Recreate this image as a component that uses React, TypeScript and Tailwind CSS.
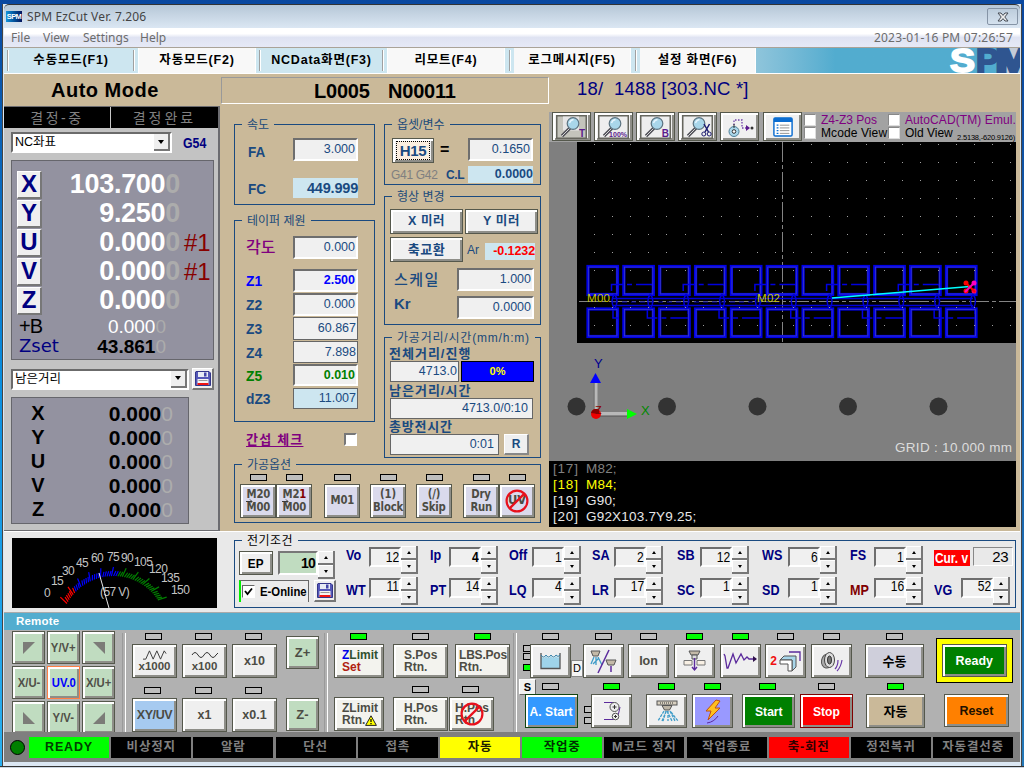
import React from "react";

type Kids = { children?: React.ReactNode; c?: string };

const bevel =
  "box-border flex shrink-0 items-center justify-center border border-[#55584c] shadow-[inset_2px_2px_0_#ffffff,inset_-2px_-2px_0_#8e8e88]";
const sunken =
  "box-border flex shrink-0 items-center justify-end border-2 border-t-[#6e6e6e] border-l-[#6e6e6e] border-r-white border-b-white bg-[#f0f0f0]";
const flat = "box-border flex shrink-0 items-center justify-end border border-[#666] bg-[#f0f0f0]";

function Group({ title, c = "", tc = "bg-[#cab999] text-[#1a4a7a]", children }: Kids & { title: string; tc?: string }) {
  return (
    <div className={`box-border flex shrink-0 flex-col border border-[#1a4a80] ${c}`}>
      <div className={`-mt-[9px] ml-[7px] flex h-[17px] shrink-0 items-center self-start px-[5px] text-[12px] whitespace-nowrap ${tc}`}>{title}</div>
      {children}
    </div>
  );
}

function Led({ on, c = "" }: { on?: boolean; c?: string }) {
  return <div className={`box-border h-[7px] w-[17px] shrink-0 border border-black ${on ? "bg-[#00ff00]" : "bg-[#bebebe]"} ${c}`} />;
}

function Key({ on, noLed, box, led = "", children, c = "" }: Kids & { on?: boolean; noLed?: boolean; box: string; led?: string }) {
  return (
    <div className={`flex shrink-0 flex-col items-center ${c}`}>
      <Led on={on} c={`${noLed ? "invisible" : ""} ${led}`} />
      <div className={`${bevel} mt-[4px] h-[34px] ${box}`}>{children}</div>
    </div>
  );
}

const tabs = [
  { t: "수동모드(F1)", c: "w-[135px] bg-[#cde6f0]", lined: true },
  { t: "자동모드(F2)", c: "w-[117px] bg-[#f8f8f8]", lined: false },
  { t: "NCData화면(F3)", c: "w-[132px] bg-[#cde6f0]", lined: true },
  { t: "리모트(F4)", c: "w-[117px] bg-[#f8f8f8]", lined: false },
  { t: "로그메시지(F5)", c: "w-[117px] bg-[#f8f8f8]", lined: false, gap: true },
  { t: "설정 화면(F6)", c: "w-[116px] bg-[#f8f8f8]", lined: false, gap: true },
];

function SpmLogo() {
  return (
    <svg width="71" height="25" viewBox="0 0 71 25">
      <path d="M50 0H71V25H50z" fill="#c4ccd8" />
      <g fontFamily="Liberation Sans" fontSize="33" fontWeight="bold">
        <text x="1" y="24" textLength="25" lengthAdjust="spacingAndGlyphs" fill="#fff" stroke="#fff" strokeWidth="1.800">S</text>
        <text x="27" y="24" textLength="23" lengthAdjust="spacingAndGlyphs" fill="#2f5590" stroke="#2f5590" strokeWidth="2">P</text>
        <text x="47" y="24" textLength="35" lengthAdjust="spacingAndGlyphs" fill="#2f5590" stroke="#2f5590" strokeWidth="3.500">M</text>
      </g>
    </svg>
  );
}

function TopBars() {
  return (
    <>
      <div className="flex h-[24px] shrink-0 items-center rounded-t-[5px] border-t border-[#333] bg-gradient-to-b from-[#b6c7d7] to-[#dbe7f3] pl-[2px]">
        <div className="flex h-[11px] w-[16px] items-center justify-center overflow-hidden bg-gradient-to-r from-[#1594dc] to-[#05145e] text-[7.500px] font-bold tracking-[-0.6px] text-white">SPM</div>
        <div className="ml-[5px] w-[400px] font-['Noto_Sans',sans-serif] text-[12px] tracking-[0.15px] text-[#444]">SPM EzCut Ver. 7.206</div>
        <div className="mr-[2px] ml-auto box-border flex h-[17px] w-[31px] items-center justify-center rounded-[2px] border border-[#8594a6]">
          <svg width="12" height="10" viewBox="0 0 12 10">
            <path d="M1 1h3l2 2.400L8 1h3L7.800 5 11 9H8L6 6.600 4 9H1l3.200-4z" fill="#eee" stroke="#444b55" />
          </svg>
        </div>
      </div>
      <div className="flex h-[19px] shrink-0 items-center bg-gradient-to-b from-white from-30% via-[#dfe3f2] via-50% to-[#e6e9f7] font-['Noto_Sans',sans-serif] text-[12px] text-[#6c6c6c]">
        <span className="ml-[7px] w-[32px]">File</span>
        <span className="w-[40px]">View</span>
        <span className="w-[57px]">Settings</span>
        <span>Help</span>
        <span className="mr-[7px] ml-auto text-[12px] tracking-[0.2px]">2023-01-16 PM 07:26:57</span>
      </div>
      <div className="flex h-[27px] shrink-0 border-t border-b border-t-[#aaa398] border-b-white bg-[#cde6f0]">
        {tabs.map((t) => (
          <React.Fragment key={t.t}>
            {t.gap && (
              <div className="flex w-[9px] shrink-0 justify-center pt-[2px]">
                <span className="h-[21px] w-[2px] border-l border-[#a0a0a0] bg-white" />
              </div>
            )}
            <div className={`flex shrink-0 items-center justify-center border-r border-white text-[12.5px] font-bold whitespace-nowrap tracking-[0.8px] ${t.c}`}>
              {t.lined && <span className="mr-auto ml-[3px] h-[21px] w-[2px] border-l border-[#a0a0a0] bg-white" />}
              {t.t}
              {t.lined && <span className="mr-[3px] ml-auto h-[21px] w-[2px] border-l border-[#a0a0a0] bg-white" />}
            </div>
          </React.Fragment>
        ))}
        <div className="flex flex-1 justify-end overflow-hidden bg-gradient-to-r from-[#8fc5db] to-[#52accf] to-30%">
          <SpmLogo />
        </div>
      </div>
    </>
  );
}

function Combo({ text, c }: { text: string; c: string }) {
  return (
    <div className={`box-border flex shrink-0 items-center border-2 border-t-[#6b6b6b] border-l-[#6b6b6b] border-r-white border-b-white bg-white text-[12.5px] ${c}`}>
      <span className="ml-[2px]">{text}</span>
      <div className="mr-0 ml-auto flex h-full w-[16px] items-center justify-center border-r-2 border-b-2 border-[#777] bg-[#efefef]">
        <div className="border-x-[3.500px] border-t-[4px] border-x-transparent border-t-black" />
      </div>
    </div>
  );
}

function SaveIcon() {
  return (
    <svg width="16" height="15" viewBox="0 0 16 15">
      <path d="M1 .5h13l1.500 1.500v12.500H.5V1z" fill="#5558b8" stroke="#34368a" />
      <rect x="3" y="1" width="10" height="5" fill="#e8ecf4" />
      <rect x="9" y="1.500" width="2.500" height="4" fill="#4447a8" />
      <rect x="2.500" y="8" width="11" height="6" fill="#f4f4f4" />
      <path d="M3.500 9.500h9" stroke="#999" />
      <rect x="2.500" y="12" width="11" height="2" fill="#f01414" />
    </svg>
  );
}

const axes = [
  { n: "X", v: "103.700", e: "" },
  { n: "Y", v: "9.250", e: "" },
  { n: "U", v: "0.000", e: "#1" },
  { n: "V", v: "0.000", e: "#1" },
  { n: "Z", v: "0.000", e: "" },
];

function LeftPanel() {
  return (
    <div className="box-border flex w-[216px] shrink-0 flex-col border-t border-r-2 border-b border-[#6c6c70] bg-[#c3c3c3]">
      <div className="flex h-[21px] shrink-0 bg-black text-[14px] text-[#808080]">
        <div className="flex w-[107px] items-center justify-center border-r border-[#c8c8c8] tracking-[2.500px]">결정-중</div>
        <div className="flex flex-1 items-center justify-center tracking-[3px]">결정완료</div>
      </div>
      <div className="mt-[4px] flex items-center">
        <Combo text="NC좌표" c="ml-[7px] h-[21px] w-[161px]" />
        <span className="ml-[11px] origin-left scale-x-[0.88] text-[14px] font-bold text-[#000080]">G54</span>
      </div>
      <div className="mt-[7px] ml-[7px] box-border flex h-[200px] w-[203px] shrink-0 flex-col border border-[#66666c] bg-[#9392a0] pt-[9px] pl-[5px]">
        {axes.map((a) => (
          <div key={a.n} className="flex h-[29px] shrink-0 items-center">
            <div className="box-border flex h-[28px] w-[25px] items-center justify-center border-t border-l border-r-2 border-b-2 border-t-white border-l-white border-r-[#777] border-b-[#777] bg-[#efefef] text-[24px] font-bold text-[#000080]">{a.n}</div>
            <div className="w-[138px] text-right text-[27px] font-bold tracking-[-0.3px] text-white">
              {a.v}
              <span className="text-[#acacac]">0</span>
            </div>
            <div className="ml-[4px] text-[24px] text-[#880000]">{a.e}</div>
          </div>
        ))}
        <div className="flex h-[22px] shrink-0 items-center">
          <span className="w-[43px] pl-[2px] text-[20px] tracking-[-1px]">+B</span>
          <span className="w-[106px] text-right text-[19px] text-white">
            0.000<span className="text-[#acacac]">0</span>
          </span>
        </div>
        <div className="flex h-[18px] shrink-0 items-center">
          <span className="w-[43px] pl-[2px] font-['DejaVu_Sans',sans-serif] text-[18px] text-[#000080]">Zset</span>
          <span className="w-[106px] text-right text-[19px] font-bold">
            43.861<span className="font-normal text-[#acacac]">0</span>
          </span>
        </div>
      </div>
      <div className="mt-[8px] flex shrink-0 items-center">
        <Combo text="남은거리" c="ml-[7px] h-[21px] w-[178px]" />
        <div className="ml-[3px] box-border flex h-[22px] w-[22px] items-center justify-center border-t border-l border-r-2 border-b-2 border-t-white border-l-white border-r-[#777] border-b-[#777] bg-[#efefef]">
          <SaveIcon />
        </div>
      </div>
      <div className="mt-[7px] ml-[7px] box-border flex h-[127px] w-[178px] shrink-0 flex-col border border-[#66666c] bg-[#9392a0] pt-[3px]">
        {axes.map((a) => (
          <div key={a.n} className="flex h-[24px] shrink-0 items-center font-bold">
            <span className="ml-[15px] w-[22px] text-center text-[20px]">{a.n}</span>
            <span className="w-[124px] text-right text-[21px]">
              0.000<span className="font-normal text-[#adadad]">0</span>
            </span>
          </div>
        ))}
      </div>
    </div>
  );
}

const taper = [
  { l: "각도", v: "0.000", r: "mt-[7px] h-[23px]", lc: "font-medium text-[16px] text-[#800080]", b: sunken, vc: "text-[#1a4a80]" },
  { l: "Z1", v: "2.500", r: "mt-[10px] h-[23px]", lc: "text-[#0000ff]", b: sunken, vc: "text-[#0000ff] font-bold" },
  { l: "Z2", v: "0.000", r: "mt-px h-[23px]", lc: "text-[#1a4a80]", b: sunken, vc: "text-[#1a4a80]" },
  { l: "Z3", v: "60.867", r: "mt-px h-[23px]", lc: "text-[#1a4a80]", b: flat, vc: "text-[#1a4a80]" },
  { l: "Z4", v: "7.898", r: "mt-px h-[22px]", lc: "text-[#1a4a80]", b: flat, vc: "text-[#1a4a80]" },
  { l: "Z5", v: "0.010", r: "mt-px h-[22px]", lc: "text-[#008000]", b: sunken, vc: "text-[#008000] font-bold" },
];

function NoSign({ size }: { size: number }) {
  return (
    <svg width={size} height={size} viewBox="0 0 24 24" className="shrink-0">
      <path d="M4.600 19.400L19.400 4.600" stroke="#e8101c" strokeWidth="2.200" />
      <circle cx="12" cy="12" r="10.400" fill="none" stroke="#e8101c" strokeWidth="2.200" />
    </svg>
  );
}

const optBox = "bg-[#dadaec] text-[#4c4c44] text-[11.5px] font-bold font-['DejaVu_Sans','Noto_Sans_CJK_KR',sans-serif] flex-col text-center";

function OptKey({ a, b, box = "w-[36px]", c = "", arrow }: { a: React.ReactNode; b?: React.ReactNode; box?: string; c?: string; arrow?: boolean }) {
  return (
    <div className={`flex shrink-0 flex-col items-center ${c}`}>
      <Led />
      <div className={`${bevel} ${optBox} mt-[3px] h-[34px] ${box}`}>
        <span className="scale-x-[0.88] tracking-[-0.2px]">{a}</span>
        {arrow && (
          <svg width="9" height="5" viewBox="0 0 9 5" className="-mt-[2px] -mb-[2px] ml-[4px] self-start">
            <path d="M1 2.500h6M5 .5l2 2-2 2" fill="none" stroke="#3c3c38" />
          </svg>
        )}
        {b && <span className={`scale-x-[0.88] tracking-[-0.2px] ${arrow ? "" : "mt-[2px]"}`}>{b}</span>}
      </div>
    </div>
  );
}

function MiddlePanel() {
  return (
    <div className="flex w-[329px] shrink-0 flex-col pt-[18px] pl-[14px]">
      <div className="flex gap-[9px]">
        <div className="flex h-[340px] w-[141px] flex-col">
          <Group title="속도" c="h-[81px]">
            <div className="mt-[5px] ml-[13px] flex h-[23px] shrink-0 items-center">
              <span className="mt-[4px] w-[45px] origin-left scale-x-[0.9] text-[15px] font-bold text-[#1a4a80]">FA</span>
              <div className={`${sunken} h-full w-[65px] pr-px text-[12.5px] text-[#1a4a80]`}>3.000</div>
            </div>
            <div className="mt-[17px] ml-[13px] flex h-[20px] shrink-0 items-center">
              <span className="w-[45px] origin-left scale-x-[0.9] text-[15px] font-bold text-[#1a4a80]">FC</span>
              <div className="flex h-full w-[65px] items-center justify-end bg-[#cde6f0] text-[14.500px] font-bold tracking-[-0.2px] text-[#1a4a80]">449.999</div>
            </div>
          </Group>
          <Group title="테이퍼 제원" c="mt-[15px] h-[202px]">
            {taper.map((t, i) => (
              <div key={t.l} className={`ml-[11px] flex shrink-0 items-center ${t.r}`}>
                <span className={`w-[47px] shrink-0 ${i ? "origin-left scale-x-[0.92] text-[15px] font-bold" : ""} ${t.lc}`}>{t.l}</span>
                <div className={`${t.b} h-full w-[65px] pr-px text-[12.5px] ${t.vc}`}>{t.v}</div>
              </div>
            ))}
            <div className="mt-[2px] ml-[11px] flex h-[21px] shrink-0 items-center">
              <span className="w-[47px] origin-left scale-x-[0.92] text-[15px] font-bold text-[#1a4a80]">dZ3</span>
              <div className="box-border flex h-full w-[65px] items-center justify-end border border-[#666] bg-[#cde6f0] pr-px text-[12.5px] text-[#1a4a80]">11.007</div>
            </div>
          </Group>
          <div className="mt-[10px] flex h-[14px] items-center">
            <span className="ml-[12px] w-[98px] text-[13px] font-bold whitespace-nowrap text-[#800080]"><span className="tracking-[1.200px] underline underline-offset-2">간섭 체크</span></span>
            <div className="box-border h-[13px] w-[13px] border-2 border-t-[#777] border-l-[#777] border-r-white border-b-white bg-white" />
          </div>
        </div>
        <div className="flex w-[157px] flex-col">
          <Group title="옵셋/변수" c="h-[61px]">
            <div className="mt-[5px] ml-[7px] flex h-[25px] shrink-0 items-start">
              <div className={`${bevel} h-[25px] w-[42px] bg-[#f0f0f0]`}>
                <span className="flex h-[19px] w-[34px] items-center justify-center border border-dotted border-black bg-[#fbeee0] text-[15px] font-bold tracking-[-0.3px] text-[#1a4a80]">H15</span>
              </div>
              <span className="mt-[4px] ml-[6px] w-[28px] text-[16px] font-bold">=</span>
              <div className={`${sunken} h-[23px] w-[65px] pr-px text-[12.5px] text-[#1a4a80]`}>0.1650</div>
            </div>
            <div className="mt-[3px] ml-[6px] flex h-[17px] shrink-0 items-center">
              <span className="w-[55px] text-[12px] tracking-[-0.3px] text-[#808080]">G41 G42</span>
              <span className="w-[22px] text-[12px] font-bold tracking-[-0.4px] text-[#1a4a80]">C.L</span>
              <div className="flex h-full w-[65px] items-center justify-end bg-[#cde6f0] text-[12.5px] font-bold text-[#1a4a80]">0.0000</div>
            </div>
          </Group>
          <Group title="형상 변경" c="mt-[11px] h-[129px]">
            <div className="mt-[4px] ml-[5px] flex gap-[2px] text-[12.5px] font-bold tracking-[0.6px] text-[#1a4a80]">
              <div className={`${bevel} h-[25px] w-[73px] bg-[#f0f0f0]`}>X 미러</div>
              <div className={`${bevel} h-[25px] w-[73px] bg-[#f0f0f0]`}>Y 미러</div>
            </div>
            <div className="mt-[3px] ml-[5px] flex h-[25px] shrink-0 items-center">
              <div className={`${bevel} h-[25px] w-[73px] bg-[#f0f0f0] text-[13px] font-bold tracking-[0.6px] text-[#1a4a80]`}>축교환</div>
              <span className="ml-[4px] w-[18px] text-[12px] text-[#1a4a80]">Ar</span>
              <div className="mt-[4px] flex h-[17px] w-[50px] items-center justify-end bg-[#cde6f0] text-[12.5px] font-bold tracking-[-0.1px] text-[#ff0000]">-0.1232</div>
            </div>
            <div className="mt-[6px] ml-[9px] flex h-[23px] shrink-0 items-center">
              <span className="w-[63px] text-[15px] font-medium tracking-[1.500px] text-[#1a4a80]">스케일</span>
              <div className={`${sunken} h-full w-[77px] pr-px text-[12.5px] text-[#1a4a80]`}>1.000</div>
            </div>
            <div className="mt-[5px] ml-[9px] flex h-[23px] shrink-0 items-center">
              <span className="mb-[8px] w-[63px] text-[15px] font-bold text-[#1a4a80]">Kr</span>
              <div className={`${sunken} h-full w-[77px] pr-px text-[12.5px] text-[#1a4a80]`}>0.0000</div>
            </div>
          </Group>
          <Group title="가공거리/시간(mm/h:m)" c="mt-[12px] h-[121px]" tc="bg-[#cab999] text-[#1a4a7a] tracking-[0.8px]">
            <div className="ml-[4px] flex flex-col text-[12.500px] text-[#1a4a80]">
              <span className="flex h-[15px] items-center text-[13px] font-bold tracking-[1px]">전체거리/진행</span>
              <div className="ml-px flex h-[21px] gap-[2px]">
                <div className={`${flat} w-[69px] pr-px`}>4713.0</div>
                <div className="box-border flex w-[73px] items-center justify-center border border-black bg-[#0000ff] text-[11px] font-bold text-[#ffff00]">0%</div>
              </div>
              <span className="flex h-[16px] items-center text-[13px] font-bold tracking-[1px]">남은거리/시간</span>
              <div className={`${flat} ml-px h-[21px] w-[143px] pr-[4px]`}>4713.0/0:10</div>
              <span className="flex h-[15px] items-center text-[13px] font-bold tracking-[0.8px]">총방전시간</span>
              <div className="ml-px flex h-[21px] gap-[5px]">
                <div className={`${flat} w-[109px] pr-[4px]`}>0:01</div>
                <div className="box-border flex w-[25px] items-center justify-center border-t border-l border-r-2 border-b-2 border-t-white border-l-white border-r-[#888] border-b-[#888] bg-[#efefef] text-[12px] font-bold">R</div>
              </div>
            </div>
          </Group>
        </div>
      </div>
      <Group title="가공옵션" c="h-[59px] w-[307px]">
        <div className="mt-px ml-[5px] flex">
          <OptKey a="M20" b="M00" arrow />
          <OptKey a={<>M2<span className="text-[#800000]">1</span></>} b="M00" arrow />
          <OptKey a="M01" c="ml-[12px]" />
          <OptKey a="(1)" b="Block" c="ml-[10px]" />
          <OptKey a="(/)" b="Skip" c="ml-[10px]" />
          <OptKey a="Dry" b="Run" c="ml-[11px]" box="w-[36px] border-[#3c0a70]" />
          <div className="flex flex-col items-center">
            <Led />
            <div className={`${bevel} ${optBox} relative mt-[3px] h-[34px] w-[36px] border-[#3c0a70]`}>
              <span>UV</span>
              <span className="absolute top-[4px] left-[5px]"><NoSign size={24} /></span>
            </div>
          </div>
        </div>
      </Group>
    </div>
  );
}

function Lens({ tag, plate }: { tag: string; plate?: boolean }) {
  return (
    <svg width="31" height="24" viewBox="0 0 31 24">
      <rect x=".75" y=".75" width="29.500" height="22.500" fill={plate ? "#c4c4bc" : "#eeeeee"} stroke="#66665e" strokeWidth="1.500" />
      {plate && <path d="M7 1.500h16v14H7z" fill="#e6e6e6" />}
      <path d="M14 13L6 21" stroke="#505058" strokeWidth="3.200" />
      <path d="M14 13L6 21" stroke="#d5d5d5" strokeWidth="1" />
      <circle cx="17" cy="8.500" r="5.800" fill="#a9d6ea" stroke="#5c7380" strokeWidth="1.200" />
      <path d="M13.500 8q1-3 4-3.500" stroke="#e8f6ff" fill="none" strokeWidth="1.300" />
      {tag === "cut" ? (
        <g stroke="#1b1b70" fill="none">
          <path d="M22 9l4.500 8M27.500 9L23 17" strokeWidth="1.500" />
          <circle cx="21.800" cy="19" r="2" />
          <circle cx="27.200" cy="19" r="2" />
        </g>
      ) : (
        <text x="29" y="22" textAnchor="end" fontSize={tag.length > 1 ? 7 : 10} fontWeight="bold" fill="#5b1a8c">
          {tag}
        </text>
      )}
    </svg>
  );
}

function CheckBox({ label, c }: { label: string; c: string }) {
  return (
    <div className="flex h-[13px] items-center">
      <div className="box-border h-[12px] w-[12px] shrink-0 border border-t-[#888] border-l-[#888] border-r-[#ddd] border-b-[#ddd] bg-white" />
      <span className={`ml-[5px] origin-left text-[12px] whitespace-nowrap ${c}`}>{label}</span>
    </div>
  );
}

const squares = Array.from({ length: 11 }, (_, i) => 37.5 + i * 35.85);
const dotRows = [2, 20, 38, 56, 74, 92, 110, 128, 165, 183];
const dotCols = Array.from({ length: 24 }, (_, i) => 45 + i * 18.1);

function Canvas() {
  return (
    <svg width="467" height="319" viewBox="0 0 467 319" className="block shrink-0">
      <rect width="467" height="319" fill="#7f7f7f" />
      <rect x="28" width="439" height="201" fill="#000" />
      <path d="M233.500 0V201" stroke="#848484" strokeDasharray="20 3 4 3" />
      <path d="M30 159.500H467" stroke="#848484" strokeDasharray="20 3 4 3" />
      <g fill="none">
        {squares.map((x, i) => (
          <g key={x}>
            <g stroke="#0000e8" strokeWidth="3.200">
              <rect x={x + 1.500} y="124.500" width="29.500" height="28" />
              <rect x={x + 1.500} y="167" width="29.500" height="27.500" />
            </g>
            <g stroke="#5050b0" strokeWidth="0.600">
              <rect x={x + 2} y="125" width="28.500" height="27" />
              <rect x={x + 2} y="167.500" width="28.500" height="26.500" />
            </g>
            <path d={`M${x + 28} 152q-5 7 0 15M${x + 28} 152q5 7 0 15`} stroke="#0000d8" strokeWidth="1.500" />
            {i % 2 === 0 && i < 10 && <path d={`M${x + 25} 149V142.500H${x + 66}V152`} stroke="#0000e0" strokeWidth="1.500" strokeDasharray="18 4 5 4" />}
            {i % 2 === 1 && <path d={`M${x + 25} 168V176H${x + 66}V168`} stroke="#0000e0" strokeWidth="1.500" strokeDasharray="18 4 5 4" />}
          </g>
        ))}
        <path d="M64 156.500H424M64 163.500H424" stroke="#0000d8" strokeWidth="1.500" />
        <path d="M64 160H230" stroke="#0000b0" strokeDasharray="5 4" />
        <path d="M64 168V176H70" stroke="#0000e0" strokeWidth="1.500" />
        <path d="M283 156L421 144.500" stroke="#00ffff" strokeWidth="1.300" />
      </g>
      <g fill="#a0a0a0">
        {dotRows.map((y) => dotCols.map((x) => <rect key={`${x}-${y}`} x={Math.round(x)} y={y} width="1" height="1" />))}
      </g>
      <g fontSize="11.500" fill="#c8c800">
        <text x="38" y="159.500" textLength="23">M00</text>
        <text x="208" y="159.500" textLength="23">M02</text>
      </g>
      <g>
        <circle cx="417" cy="141" r="2.500" fill="#ff0000" />
        <circle cx="417" cy="149" r="2.500" fill="#ff0000" />
        <circle cx="425" cy="141" r="2.500" fill="#ff00c0" />
        <circle cx="425" cy="149" r="2.500" fill="#ff0060" />
        <path d="M416 140l10 10" stroke="#ff0000" strokeWidth="2" />
        <path d="M426 140l-10 10" stroke="#ff00c0" strokeWidth="2" />
      </g>
      <g fill="#333333">
        {[27.5, 118, 208.5, 299, 389.5].map((x) => (
          <circle key={x} cx={x} cy="264.500" r="9" />
        ))}
      </g>
      <path d="M46.500 240V268" stroke="#b8b8b8" strokeWidth="4" />
      <path d="M45 240V268" stroke="#555" />
      <path d="M50 272H78" stroke="#b8b8b8" strokeWidth="4" />
      <path d="M50 274H78" stroke="#555" />
      <path d="M46.500 231L52 241H41z" fill="#0000ff" />
      <path d="M88 272L78 277V267z" fill="#00ff00" />
      <circle cx="47" cy="272" r="5" fill="#ee0000" />
      <path d="M42 271a5 5 0 0 1 8-3v4z" fill="#880000" />
      <g fontSize="13">
        <text x="45" y="225.500" fill="#000090">Y</text>
        <text x="92" y="272.500" fill="#008800">X</text>
        <text x="46" y="272" fill="#880000" fontSize="11">Z</text>
        <text x="346" y="310" fill="#dcdcdc" fontSize="13.500" textLength="117">GRID : 10.000 mm</text>
      </g>
    </svg>
  );
}

const code = [
  { n: "[17]", t: "M82;", c: "text-[#808080]" },
  { n: "[18]", t: "M84;", c: "text-[#ffff00]" },
  { n: "[19]", t: "G90;", c: "text-[#e8e8e8]" },
  { n: "[20]", t: "G92X103.7Y9.25;", c: "text-[#e8e8e8]" },
];

function RightPanel() {
  const tool = `${bevel} h-[29px] w-[39px] bg-[#f0f0f0]`;
  return (
    <div className="flex w-[467px] shrink-0 flex-col pt-[6px]">
      <div className="flex h-[30px] shrink-0 items-start bg-[#a2a2a2] pl-[3px]">
        <div className="flex gap-[3px]">
          <div className={tool}><Lens tag="T" plate /></div>
          <div className={tool}><Lens tag="100%" /></div>
          <div className={tool}><Lens tag="B" /></div>
          <div className={tool}><Lens tag="cut" /></div>
          <div className={tool}>
            <svg width="31" height="24" viewBox="0 0 31 24">
              <path d="M10 10V5h8v8h6" fill="none" stroke="#7040a8" strokeDasharray="1.500 1.500" strokeWidth="1.300" />
              <path d="M22 10l4 3-4 3z" fill="#5b1a8c" />
              <circle cx="28" cy="13" r="1.500" fill="#333" />
              <circle cx="10" cy="16.500" r="5" fill="#a9d6ea" stroke="#4f8098" />
              <circle cx="10" cy="16.500" r="1.800" fill="#fff" stroke="#333" />
              <path d="M10 9v4" stroke="#333" />
            </svg>
          </div>
          <div className={`${tool} ml-px`}>
            <svg width="20" height="20" viewBox="0 0 22 22">
              <rect x="1" y="1" width="20" height="20" rx="1.500" fill="#fff" stroke="#0a6cd0" strokeWidth="1.600" />
              <rect x="1" y="1" width="20" height="4.500" fill="#0a6cd0" />
              <path d="M4 9h2M4 12h2M4 15h2M4 18h2" stroke="#0a6cd0" strokeWidth="1.300" />
              <path d="M7.500 9H18M7.500 12H18M7.500 15H18M7.500 18H18" stroke="#888" />
            </svg>
          </div>
        </div>
        <div className="ml-[2px] flex w-[84px] flex-col pt-px">
          <CheckBox label="Z4-Z3 Pos" c="text-[#800080]" />
          <CheckBox label="Mcode View" c="tracking-[0.1px]" />
        </div>
        <div className="flex flex-1 flex-col pt-px">
          <CheckBox label="AutoCAD(TM) Emul." c="text-[#800080] tracking-[0.1px]" />
          <div className="flex">
            <CheckBox label="Old View" c="" />
            <span className="mt-[8px] mr-px ml-auto text-[7.500px] tracking-[-0.2px]">2.5138,-620.9126)</span>
          </div>
        </div>
      </div>
      <Canvas />
      <div className="flex h-[66px] shrink-0 flex-col bg-black pl-[4px] text-[13.5px]">
        {code.map((l) => (
          <div key={l.n} className={`flex h-[16px] items-center ${l.c}`}>
            <span className="w-[33px] tracking-[0.8px]">{l.n}</span>
            <span className="tracking-[0.2px]">{l.t}</span>
          </div>
        ))}
      </div>
    </div>
  );
}

const ticks = Array.from({ length: 51 }, (_, i) => {
  const a = ((211 + i * 2.36) * Math.PI) / 180;
  const r = i % 5 === 0 ? 62 : 58;
  const cx = 101.5;
  const cy = 91;
  return {
    x1: cx + Math.cos(a - 0.04) * 53,
    y1: cy + Math.sin(a - 0.04) * 53,
    x2: cx + Math.cos(a) * r,
    y2: cy + Math.sin(a) * r,
    c: i < 7 ? "#ff0000" : i < 28 ? "#0000ff" : "#008000",
  };
});

const marks: [string, number, number][] = [
  ["0", 32, 59], ["15", 39, 47], ["30", 50, 37], ["45", 64, 29], ["60", 79, 24], ["75", 95, 23],
  ["90", 109, 24], ["105", 122, 28], ["120", 137, 35], ["135", 149, 44], ["150", 159, 56],
];

function Meter() {
  return (
    <svg width="205" height="70" viewBox="0 0 205 70" className="shrink-0">
      <rect width="205" height="70" fill="#000" />
      {ticks.map((t) => (
        <path key={t.x1} d={`M${t.x1} ${t.y1}L${t.x2} ${t.y2}`} stroke={t.c} strokeWidth="1.200" />
      ))}
      <g fill="#c4c4c4" fontSize="12" letterSpacing="-0.600">
        {marks.map(([s, x, y]) => (
          <text key={s} x={x} y={y}>{s}</text>
        ))}
        <text x="88" y="58">(57 V)</text>
      </g>
      <path d="M87 35L97 70" stroke="#e8e8e8" />
    </svg>
  );
}

function Spin() {
  const b = "box-border flex h-[14px] w-[17px] items-center justify-center border-r-2 border-b-2 border-[#777] bg-[#efefef] shadow-[inset_1px_1px_0_#fff]";
  return (
    <div className="flex shrink-0 flex-col">
      <div className={b}><div className="border-x-[2.500px] border-b-[3px] border-x-transparent border-b-black" /></div>
      <div className={b}><div className="border-x-[2.500px] border-t-[3px] border-x-transparent border-t-black" /></div>
    </div>
  );
}

const params = [
  { c: "", w: "w-[23px]", a: ["Vo", "12"], b: ["WT", "11"] },
  { c: "ml-[12px]", w: "w-[19px]", a: ["Ip", "4"], b: ["PT", "14"] },
  { c: "ml-[11px]", w: "w-[23px]", a: ["Off", "1"], b: ["LQ", "4"] },
  { c: "ml-[11px]", w: "w-[22px]", a: ["SA", "2"], b: ["LR", "17"] },
  { c: "ml-[14px]", w: "w-[23px]", a: ["SB", "12"], b: ["SC", "1"] },
  { c: "ml-[13px]", w: "w-[26px]", a: ["WS", "6"], b: ["SD", "1"] },
  { c: "ml-[13px]", w: "w-[24px]", a: ["FS", "1"], b: ["MP", "16"] },
];

function ParamRow({ d, w, low }: { d: string[]; w: string; low?: boolean }) {
  return (
    <div className="flex h-[31px] shrink-0 items-start">
      <span className={`shrink-0 origin-left scale-x-[0.84] text-[15px] font-bold whitespace-nowrap ${w} ${low ? "mt-[5px]" : "mt-[1px]"} ${d[0] === "MP" ? "text-[#800000]" : "text-[#000080]"}`}>{d[0]}</span>
      <div className={`${sunken} mt-px h-[20px] w-[32px]`}>
        <span className={`origin-right scale-x-[0.78] text-[15.5px] ${low ? "-mt-[4px]" : "-mt-px"} ${d[0] === "Ip" ? "font-bold" : ""}`}>{d[1]}</span>
      </div>
      <Spin />
    </div>
  );
}

function Electric() {
  return (
    <div className="box-border flex h-[81px] shrink-0 items-start border-t border-white bg-[#e9e9e9] pl-[8px]">
      <div className="mt-[6px] flex"><Meter /></div>
      <Group title="전기조건" c="mt-[8px] ml-[17px] h-[68px] w-[782px]" tc="bg-[#e9e9e9] text-black tracking-[0.5px]">
        <div className="-mt-[3px] flex items-start pl-[4px]">
          <div className="mt-[5px] flex w-[107px] shrink-0 flex-col">
            <div className="flex items-start">
              <div className={`${bevel} h-[24px] w-[34px] bg-[#efefef]`}>
                <span className="scale-x-90 text-[13px] font-bold">EP</span>
              </div>
              <div className="ml-[5px] box-border flex h-[24px] w-[40px] items-center justify-end border-2 border-t-[#777] border-l-[#777] border-r-white border-b-white bg-[#c0dcc0] pr-px text-[14px] font-bold tracking-[-0.8px]">10</div>
              <Spin />
            </div>
            <div className="mt-px flex items-start">
              <div className="box-border flex h-[22px] w-[70px] items-center border-t border-r border-l-2 border-t-[#666] border-r-[#666] border-l-[#00f000] bg-[#ececec]">
                <div className="ml-px box-border flex h-[13px] w-[13px] shrink-0 items-center justify-center border border-t-[#666] border-l-[#666] border-r-white border-b-white bg-white">
                  <svg width="9" height="9" viewBox="0 0 9 9"><path d="M1 4l2.500 3L8 1.500" fill="none" stroke="#000" strokeWidth="1.800" /></svg>
                </div>
                <span className="ml-[5px] origin-left scale-x-[0.84] text-[13.5px] font-bold whitespace-nowrap">E-Online</span>
              </div>
              <div className="ml-[5px] box-border flex h-[22px] w-[22px] shrink-0 items-center justify-center border-t border-l border-r-2 border-b-2 border-t-white border-l-white border-r-[#777] border-b-[#777] bg-[#efefef]">
                <SaveIcon />
              </div>
            </div>
          </div>
          {params.map((p) => (
            <div key={p.a[0]} className={`flex shrink-0 flex-col ${p.c}`}>
              <ParamRow d={p.a} w={p.w} />
              <ParamRow d={p.b} w={p.w} low />
            </div>
          ))}
          <div className="ml-[11px] flex shrink-0 flex-col">
            <div className="flex h-[31px] items-start">
              <div className="mt-[4px] flex h-[16px] w-[36px] items-center overflow-hidden bg-[#ff0000]">
                <span className="ml-px origin-left scale-x-[0.82] text-[14.5px] font-bold whitespace-nowrap text-white">Cur. v</span>
              </div>
              <div className="mt-px ml-[3px] box-border flex h-[19px] w-[40px] items-center justify-end border border-t-[#888] border-l-[#888] border-r-white border-b-white pr-[4px] text-[15px] tracking-[-0.5px]">23</div>
            </div>
            <ParamRow d={["VG", "52"]} w="w-[27px]" low />
          </div>
        </div>
      </Group>
    </div>
  );
}

function Tri({ d }: { d: string }) {
  return <svg width="12" height="12" viewBox="0 0 12 12"><path d={d} fill="#7c7c78" /></svg>;
}

const pad: React.ReactNode[] = [
  <Tri key="a" d="M0 0H12L0 12z" />, "Y/V+", <Tri key="b" d="M0 0H12V12z" />,
  "X/U-", "UV.0", "X/U+",
  <Tri key="c" d="M0 0V12H12z" />, "Y/V-", <Tri key="d" d="M12 0V12H0z" />,
];

function Divider({ c }: { c: string }) {
  return <div className={`mt-[3px] h-[99px] w-[4px] shrink-0 border-r border-l border-l-[#9a9a9a] border-r-white ${c}`} />;
}

const ns = "text-[12.5px] font-bold text-[#4c4c44]";
const small = "flex-col items-start pl-[7px] text-[12px] font-bold leading-[12px] text-[#4c4c44] whitespace-nowrap";

function Shower() {
  return (
    <svg width="26" height="24" viewBox="0 0 26 24">
      <rect x="3" y="2" width="20" height="4" fill="#d8d0c0" stroke="#555" />
      <path d="M8 6.500H18L15.500 11H10.500z" fill="#bdb5a6" stroke="#555" />
      <path d="M6 4h14" stroke="#333" strokeDasharray="1 1" />
      <path d="M10 12L4 22M12 12L9 22M14 12v10M16 12l5 10M17 13l7 9M8 22l4-9M13 12l5 10" stroke="#3f9cc8" strokeWidth="1.300" strokeDasharray="3 1" />
    </svg>
  );
}

function MiniLed({ on, c }: { on?: boolean; c: string }) {
  return <div className={`box-border h-[7px] w-[8px] border border-r-0 border-black ${on ? "bg-[#00ff00]" : "bg-[#bebebe]"} ${c}`} />;
}

const iconBox = "w-[41px] bg-[#efefef]";

function Remote() {
  return (
    <div className="flex h-[102px] shrink-0 items-start overflow-hidden bg-[#b1b1b1] pl-[8px]">
      <div className="mt-px grid shrink-0 grid-cols-[33px_33px_33px] gap-x-[2px] gap-y-[2px]">
        {pad.map((p, i) => (
          <div key={i} className={`${bevel} h-[33px] bg-[#c0dcc0] text-[13px] font-bold whitespace-nowrap ${i === 4 ? "border-[#ff7f45] text-[#0000ff]" : "text-[#505048]"}`}>
            {typeof p === "string" ? <span className="scale-x-[0.87]">{p}</span> : p}
          </div>
        ))}
      </div>
      <Divider c="ml-[7px]" />
      <div className="mt-[3px] ml-[6px] flex flex-col gap-[9px]">
        <div className="flex gap-[5px]">
          <Key led="mr-[2px]" box={`w-[45px] bg-[#efefef] flex-col ${ns}`}>
            <svg width="28" height="12" viewBox="0 0 28 13"><path d="M1 11h3l4-9 4 9 4-9 4 9 4-9 2 3" fill="none" stroke="#333" /></svg>
            <span className="text-[11.5px]">x1000</span>
          </Key>
          <Key led="mr-[2px]" box={`w-[45px] bg-[#efefef] flex-col ${ns}`}>
            <svg width="28" height="11" viewBox="0 0 28 11"><path d="M1 6q3-5 6 0t6 0 6 0 6 0l2-2" fill="none" stroke="#333" /></svg>
            <span className="mt-px text-[11.5px]">x100</span>
          </Key>
          <Key led="mr-[2px]" box={`w-[45px] bg-[#efefef] ${ns}`}>x10</Key>
        </div>
        <div className="flex gap-[5px]">
          <Key led="mr-[4px]" box={`w-[45px] bg-[#a6caf0] ${ns} tracking-[-0.4px]`}>XY/UV</Key>
          <Key led="mr-[2px]" box={`w-[45px] bg-[#efefef] ${ns}`}>x1</Key>
          <Key led="mr-[2px]" box={`w-[45px] bg-[#efefef] ${ns}`}>x0.1</Key>
        </div>
      </div>
      <div className="mt-[6px] ml-[9px] flex flex-col gap-[29px]">
        <div className={`${bevel} h-[33px] w-[33px] bg-[#c0dcc0] text-[13px] font-bold text-[#4c4c44]`}>Z+</div>
        <div className={`${bevel} h-[33px] w-[33px] bg-[#c0dcc0] text-[13px] font-bold text-[#4c4c44]`}>Z-</div>
      </div>
      <Divider c="ml-[5px]" />
      <div className="mt-[3px] ml-[6px] flex flex-col gap-[8px]">
        <div className="flex">
          <Key on led="mr-[2px]" box={`w-[50px] bg-[#f3f3ee] ${small}`}>
            <span className="text-[#305030]"><span className="text-[#0000e8]">Z</span>Limit</span>
            <span className="text-[#b02010]">Set</span>
          </Key>
          <Key c="ml-[9px]" box={`w-[55px] bg-[#f3f3ee] pl-[10px]! ${small}`}><span>S.Pos</span><span>Rtn.</span></Key>
          <Key on c="ml-[7px]" box={`w-[55px] bg-[#f3f3ee] pl-[3px]! ${small}`}><span className="tracking-[-0.2px]">LBS.Pos</span><span>Rtn.</span></Key>
        </div>
        <div className="flex">
          <Key noLed box={`w-[50px] bg-[#f3f3ee] ${small}`}>
            <span>ZLimit</span>
            <span className="flex items-center">Rtn.
              <svg width="12" height="11" viewBox="0 0 12 11"><path d="M6 .8L11.400 10.400H.6z" fill="#ffff00" stroke="#222" /><path d="M6 4v3M6 8v1.200" stroke="#000" strokeWidth="1.200" /></svg>
            </span>
          </Key>
          <Key c="ml-[9px]" box={`w-[55px] bg-[#f3f3ee] pl-[10px]! ${small}`}><span>H.Pos</span><span>Rtn.</span></Key>
          <Key c="ml-px" led="mr-[2px]" box={`relative w-[45px] bg-[#f3f3ee] pl-[5px]! ${small}`}>
            <span>H.Pos</span>
            <span>Rtn.</span>
            <span className="absolute top-[4px] left-[10px]"><NoSign size={24} /></span>
          </Key>
        </div>
      </div>
      <Divider c="ml-[3px]" />
      <div className="mt-[3px] ml-[6px] flex flex-col">
        <div className="flex items-start">
          <div className="flex flex-col pt-[12px]">
            <MiniLed c="" /><MiniLed c="mt-px" /><MiniLed on c="mt-[4px]" />
          </div>
          <Key box={iconBox} c="-ml-px">
            <svg width="21" height="18" viewBox="0 0 21 18"><path d="M1 4q2.500 4 5 0 2.500 4 5 0 2.500 4 5 0 2 3 4 0V16H1z" fill="#9fd4ea" /><path d="M1 1V16.500H20V1" fill="none" stroke="#555" strokeWidth="1.300" /><path d="M1 3q2.500 4 5 0 2.500 4 5 0 2.500 4 5 0 2 3 4 0" fill="none" stroke="#2f7da5" /></svg>
          </Key>
          <div className="mt-[27px] box-border flex h-[17px] w-[12px] shrink-0 items-center justify-center border border-[#888] bg-[#f4f4f4] text-[11px]">D</div>
          <Key box={iconBox}>
            <svg width="29" height="25" viewBox="0 0 29 25">
              <path d="M2 2H11L9 7H4z" fill="#c4baa8" stroke="#555" /><path d="M5 8L2 15M7 8v8M9 8l4 8M4 15l6-6" stroke="#3f9cc8" strokeWidth="1.300" />
              <path d="M9 24L20 1" stroke="#5b2a9c" strokeWidth="1.500" />
              <path d="M17 11H27L25 16H19z" fill="#c4baa8" stroke="#555" /><path d="M22 17v6" stroke="#5b2a9c" strokeWidth="1.500" />
            </svg>
          </Key>
          <Key box={`${iconBox} ${ns}`} c="ml-[4px]">Ion</Key>
          <Key on box={iconBox} c="ml-[5px]">
            <svg width="23" height="22" viewBox="0 0 23 22"><path d="M6 1H17L15 5H8z" fill="#c4baa8" stroke="#555" /><path d="M9 5h5v4H9z" fill="#ddd" stroke="#555" /><path d="M1 10.500H9V15H1zM14 10.500H22V15H14z" fill="#f8f0e4" stroke="#777" /><path d="M11.500 8v11M9 17l2.500 3 2.500-3" fill="none" stroke="#5b2a9c" strokeWidth="1.400" /></svg>
          </Key>
          <Key on box={`${iconBox} border-[#4a8080]`} c="ml-[5px]">
            <svg width="35" height="20" viewBox="0 0 35 20"><path d="M1 3l1 2 2 12h1L10 3l3 9 5-9 3 6 3-3 2 2H33" fill="none" stroke="#5b2a9c" strokeWidth="1.300" /><path d="M30 5l4 3-4 3z" fill="#30104c" /></svg>
          </Key>
          <Key box={`${iconBox} border-[#4a8080]`} c="ml-[4px]">
            <span className="text-[12px] font-bold text-[#f01010]">2</span>
            <svg width="24" height="21" viewBox="0 0 24 21"><path d="M12 1H23V10" fill="none" stroke="#5b2a9c" strokeWidth="1.300" /><path d="M3 9L7 5H19V16L15 20V9z" fill="#a9d6ea" stroke="#555" /><path d="M3 9H15V20H11V13H3z" fill="#fff" stroke="#555" /></svg>
          </Key>
          <Key box={`${iconBox} border-[#4a8080]`} c="ml-[5px]">
            <svg width="23" height="21" viewBox="0 0 23 21"><ellipse cx="7" cy="10" rx="5.500" ry="7" fill="#aaa" stroke="#555" transform="rotate(10 7 10)" /><ellipse cx="9.500" cy="9" rx="5" ry="7.500" fill="#ddd" stroke="#444" /><ellipse cx="9.500" cy="9" rx="2" ry="4" fill="#777" stroke="#333" /><path d="M18 9q0 6-3 9M22 9q-1 7-5 11" fill="none" stroke="#6a3aa8" strokeWidth="1.200" /></svg>
          </Key>
          <Key box="w-[59px] bg-[#cfcfdb] text-[13px] font-bold" c="ml-[13px]">수동</Key>
          <div className="mt-[5px] ml-[12px] box-border flex h-[45px] w-[77px] shrink-0 items-center justify-center border border-black bg-[#ffff00]">
            <div className={`${bevel} h-[33px] w-[65px] bg-[#008000] text-white`}>
              <span className="scale-x-[0.92] text-[13.5px] font-bold">Ready</span>
            </div>
          </div>
        </div>
        <div className="flex items-start">
          <div className="-mt-[4px] -ml-[4px] box-border flex h-[16px] w-[17px] shrink-0 items-center justify-center border border-t-white border-l-white border-r-[#666] border-b-[#666] bg-[#f0f0f0] text-[11px] font-bold">S</div>
          <Key box="w-[53px] bg-[#3399ff] border-[#104410] text-white whitespace-nowrap" c="-ml-[11px]" led="mr-[2px]">
            <span className="scale-x-[0.93] text-[13px] font-bold">A. Start</span>
          </Key>
          <div className="ml-[6px] flex flex-col pt-[23px]">
            <MiniLed c="" /><MiniLed c="mt-[4px]" />
          </div>
          <Key on box={iconBox} c="-ml-px">
            <svg width="18" height="20" viewBox="0 0 18 20"><path d="M1 1.500H11M17 6L15 15M1 18.500H11" fill="none" stroke="#5b2a9c" /><circle cx="11.500" cy="6" r="4.500" fill="#eee" stroke="#555" /><circle cx="12.500" cy="15.500" r="3.300" fill="#eee" stroke="#555" /><path d="M9.500 6h4M11.500 4v4M11 15.500h3M12.500 14v3" stroke="#333" /></svg>
          </Key>
          <Key on box={iconBox} c="ml-[14px]"><Shower /></Key>
          <Key on box="w-[41px] bg-[#9999ff]" c="ml-[5px]">
            <svg width="18" height="25" viewBox="0 0 18 25"><path d="M12 1L2 12h5l-3 9L16 9h-5l5-7z" fill="#ffc020" stroke="#c05010" /><path d="M3 24q7-1 11-7" fill="none" stroke="#5b2a9c" /></svg>
          </Key>
          <Key on box="w-[53px] bg-[#008000] border-[#003c00] text-white" c="ml-[9px]" led="mr-[2px]">
            <span className="scale-x-[0.93] text-[13px] font-bold">Start</span>
          </Key>
          <Key box="w-[53px] bg-[#ff0000] border-[#800000] text-white" c="ml-[5px]">
            <span className="scale-x-[0.93] text-[13px] font-bold">Stop</span>
          </Key>
          <Key on box="w-[59px] bg-[#cab999] text-[13px] font-bold" c="ml-[13px]">자동</Key>
          <div className={`${bevel} mt-[11px] ml-[19px] h-[33px] w-[65px] bg-[#ff8000] text-[#201000]`}>
            <span className="scale-x-[0.92] text-[13.5px] font-bold">Reset</span>
          </div>
        </div>
      </div>
    </div>
  );
}

const off = "bg-black text-[#808080]";
const status = [
  { t: "READY", c: "bg-[#00ff00] text-[#004000]" },
  { t: "비상정지", c: off }, { t: "알람", c: off }, { t: "단선", c: off }, { t: "접촉", c: off },
  { t: "자동", c: "bg-[#ffff00] text-[#202000]" },
  { t: "작업중", c: "bg-[#00ff00] text-[#003000]" },
  { t: "M코드 정지", c: off }, { t: "작업종료", c: off },
  { t: "축-회전", c: "bg-[#ff0000] text-[#300000]" },
  { t: "정전복귀", c: off }, { t: "자동결선중", c: off },
];

export default function App() {
  return (
    <div className="box-border flex h-[768px] w-[1024px] flex-col overflow-hidden bg-gradient-to-b from-[#0a48a0] via-[#0a8fe0] to-[#2ab0f0] pt-[4px] font-['Liberation_Sans','Noto_Sans_CJK_KR',sans-serif] leading-none text-black">
      <div className="flex h-[762px] shrink-0">
        <div className="box-border w-[3px] shrink-0 border-r border-[#444]" />
        <div className="flex w-[1018px] shrink-0 flex-col border-r border-l border-[#dbe7f3] bg-[#dbe7f3]">
          <TopBars />
          <div className="flex h-[457px] shrink-0 flex-col bg-[#cab999]">
            <div className="flex h-[32px] shrink-0 items-start">
              <div className="mt-[6px] w-[216px] pl-[47px] text-[20px] font-bold tracking-[0.500px]">Auto Mode</div>
              <div className="mt-[3px] ml-px box-border flex h-[27px] w-[328px] items-center border border-t-[#999] border-l-[#999] border-r-white border-b-white pl-[92px] text-[20px] font-bold tracking-[-0.200px]">
                <span className="w-[74px]">L0005</span>
                <span>N00011</span>
              </div>
              <div className="mt-[6px] ml-[28px] text-[18.500px] tracking-[0.2px] whitespace-pre text-[#000080]">18/  1488 [303.NC *]</div>
            </div>
            <div className="flex h-[425px] shrink-0">
              <LeftPanel />
              <MiddlePanel />
              <RightPanel />
            </div>
          </div>
          <Electric />
          <div className="box-border flex h-[18px] shrink-0 items-center border-t border-[#aaa] bg-[#52adcf] pl-[12px] text-[11.5px] font-bold tracking-[0.200px] text-white">Remote</div>
          <Remote />
          <div className="flex h-[30px] shrink-0 items-center bg-[#7f7f7f] pl-[6px]">
            <div className="box-border h-[15px] w-[15px] shrink-0 rounded-full border border-black bg-[#008000]" />
            <div className="ml-[4px] flex gap-[2.200px]">
              {status.map((s) => (
                <div key={s.t} className={`flex h-[21px] w-[80px] shrink-0 items-center justify-center text-[12.5px] font-bold whitespace-nowrap tracking-[0.8px] ${s.c}`}>{s.t}</div>
              ))}
            </div>
          </div>
        </div>
        <div className="flex-1 border-l border-[#444] bg-gradient-to-b from-[#0a48a0] to-[#2378b8]" />
      </div>
      <div className="h-[2px] shrink-0 border-t border-[#333] bg-[#cfd8e2]" />
    </div>
  );
}
